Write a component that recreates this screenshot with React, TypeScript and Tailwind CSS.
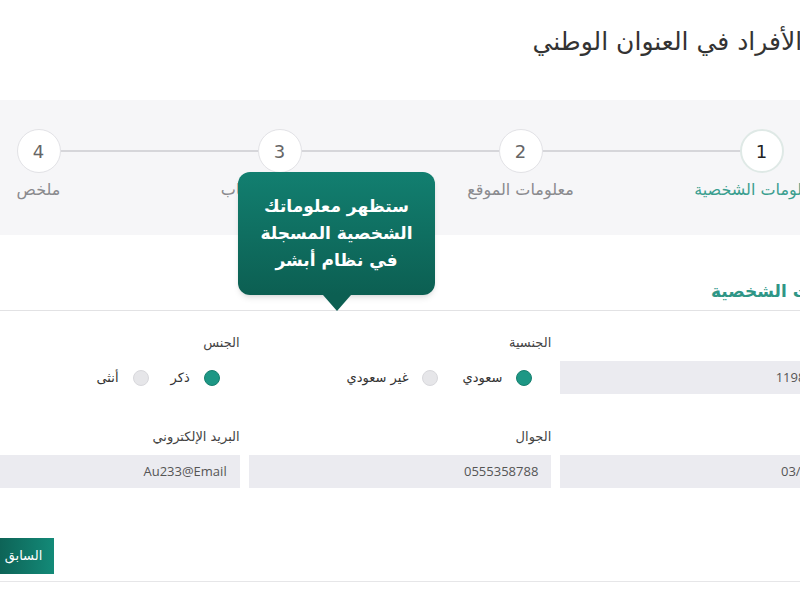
import React from 'react';

const steps = [
  { n: '1', label: 'المعلومات الشخصية', active: true },
  { n: '2', label: 'معلومات الموقع', active: false },
  { n: '3', label: 'معلومات الحساب', active: false },
  { n: '4', label: 'ملخص', active: false },
];

function Radio({ checked, label }: { checked: boolean; label: string }) {
  return (
    <div className="flex items-center gap-[14px]">
      <span
        className={
          checked
            ? 'w-4 h-4 rounded-full bg-[#1d9785] border border-[#17806f]'
            : 'w-4 h-4 rounded-full bg-[#e6e6e9] border border-[#d8d8dc]'
        }
      />
      <span className="text-[13px] text-[#333]">{label}</span>
    </div>
  );
}

function Field({ label, value }: { label: string; value: string }) {
  return (
    <div className="flex flex-col">
      <label className="text-[13px] leading-5 text-[#444] mb-[8px]">{label}</label>
      <div className="h-[33px] bg-[#ebebf0] flex items-center pr-[13px] text-[13px] text-[#555] font-['Open_Sans',sans-serif]">
        <span dir="ltr">{value}</span>
      </div>
    </div>
  );
}

export default function App() {
  return (
    <div dir="ltr" className="w-[800px] h-[600px] overflow-hidden bg-white">
      <div dir="rtl" className="relative w-[964px] ml-[-82px] font-['DejaVu_Sans',sans-serif]">
        {/* Page title */}
        <div className="h-[100px] pt-[24px]">
          <h1 className="text-[25px] leading-[36px] text-[#333]">تسجيل الأفراد في العنوان الوطني</h1>
        </div>

        {/* Stepper */}
        <div className="relative h-[135px] bg-[#f6f6f8]">
          <div className="absolute top-[50px] left-[120px] right-[120px] h-[2px] bg-[#d6d6da]" />
          <div className="relative grid grid-cols-4">
            {steps.map((s) => (
              <div key={s.n} className="flex flex-col items-center pt-[29px]">
                <div
                  className={
                    s.active
                      ? 'w-11 h-11 rounded-full bg-white border-2 border-[#dfe9e6] flex items-center justify-center text-[18px] text-[#222]'
                      : 'w-11 h-11 rounded-full bg-white border border-[#e2e2e6] flex items-center justify-center text-[18px] text-[#666]'
                  }
                >
                  {s.n}
                </div>
                <span
                  className={
                    s.active
                      ? 'mt-[6px] text-[16px] leading-[22px] text-[#3a9e8f]'
                      : 'mt-[6px] text-[16px] leading-[22px] text-[#8a8a8e]'
                  }
                >
                  {s.label}
                </span>
              </div>
            ))}
          </div>
        </div>

        {/* Section header */}
        <div className="pr-[27px] pt-[45px] pb-[8px] border-b border-[#e2e2e4]">
          <h2 className="text-[17px] leading-[22px] font-bold text-[#2f9686]">البيانات الشخصية</h2>
        </div>

        {/* Form */}
        <div className="px-[19px] pt-[22px] grid grid-cols-3 gap-x-[9px] gap-y-[33px]">
          <Field label="رقم الهوية" value="1198453612" />
          <div className="flex flex-col">
            <label className="text-[13px] leading-5 text-[#444] mb-[8px]">الجنسية</label>
            <div className="h-[33px] flex items-center gap-[24px] pr-[19px]">
              <Radio checked label="سعودي" />
              <Radio checked={false} label="غير سعودي" />
            </div>
          </div>
          <div className="flex flex-col">
            <label className="text-[13px] leading-5 text-[#444] mb-[8px]">الجنس</label>
            <div className="h-[33px] flex items-center gap-[22px] pr-[20px]">
              <Radio checked label="ذكر" />
              <Radio checked={false} label="أنثى" />
            </div>
          </div>
          <Field label="تاريخ الميلاد" value="03/05/1410" />
          <Field label="الجوال" value="0555358788" />
          <Field label="البريد الإلكتروني" value="Au233@Email" />
        </div>

        {/* Footer */}
        <div className="px-[19px] pt-[50px] pb-[7px] flex justify-end border-b border-[#e6e6e8]">
          <button className="ml-[56px] h-9 w-[61px] bg-gradient-to-l from-[#138a78] to-[#0d5f53] text-white text-[13px]">
            السابق
          </button>
        </div>

        {/* Tooltip */}
        <div className="absolute left-[320px] top-[172px] w-[197px]">
          <div className="h-[123px] rounded-[12px] bg-gradient-to-b from-[#127f70] to-[#0c5f52] shadow-md flex flex-col items-center pt-[21px] text-white font-bold text-[17px] leading-[27px] text-center">
            <span>ستظهر معلوماتك</span>
            <span>الشخصية المسجلة</span>
            <span>في نظام أبشر</span>
          </div>
          <div className="mx-auto w-0 h-0 border-l-[14px] border-r-[14px] border-t-[16px] border-l-transparent border-r-transparent border-t-[#0c5f52]" />
        </div>
      </div>
    </div>
  );
}
